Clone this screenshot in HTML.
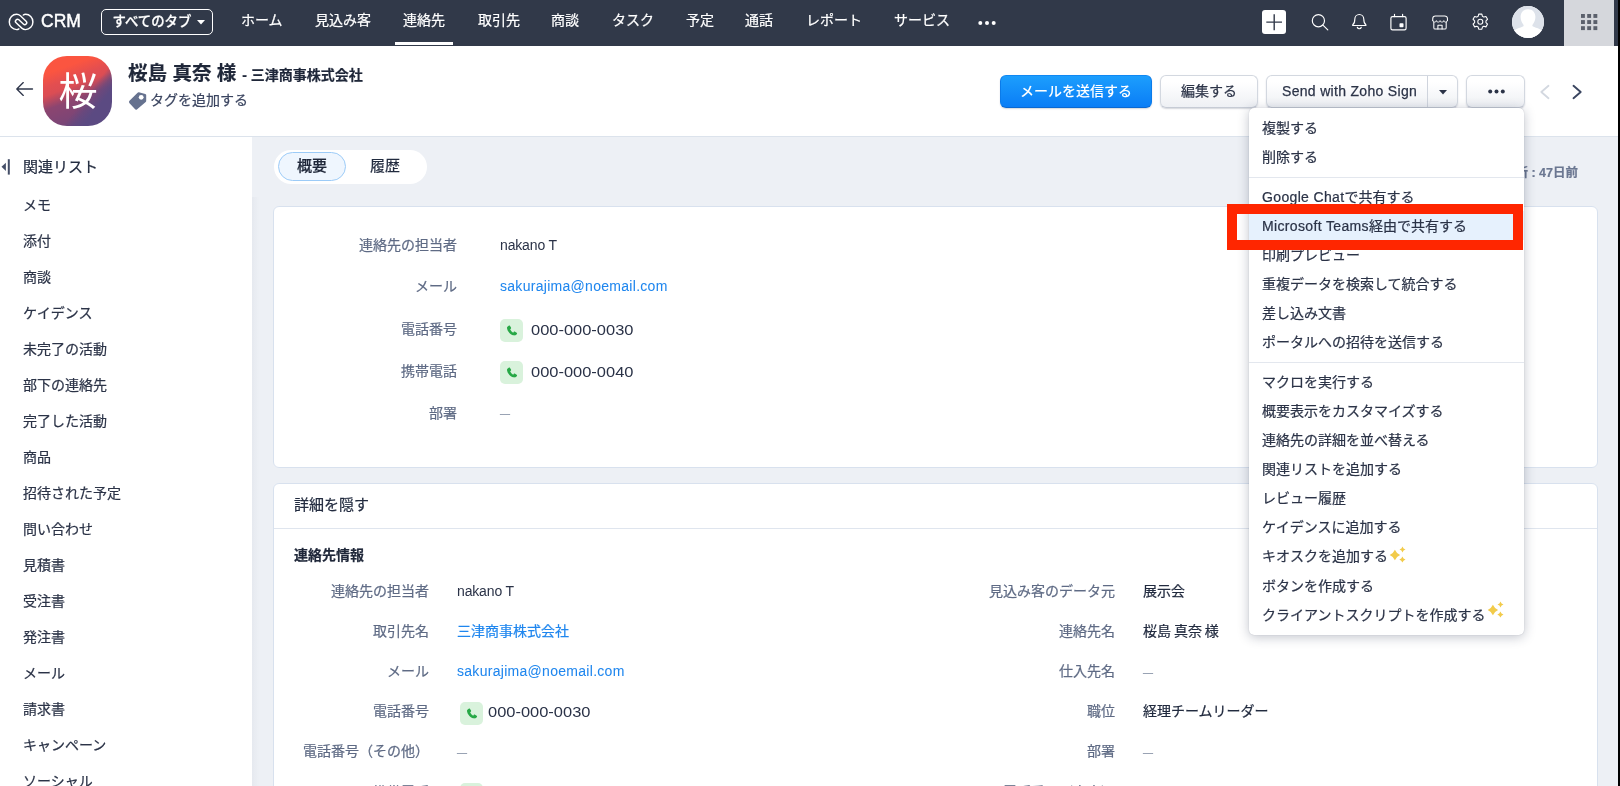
<!DOCTYPE html>
<html lang="ja">
<head>
<meta charset="utf-8">
<title>CRM</title>
<style>
*{box-sizing:border-box;margin:0;padding:0}
html,body{width:1620px;height:786px;overflow:hidden;background:#edf0f5}
body{position:relative;font-family:"Liberation Sans","Noto Sans CJK JP",sans-serif;font-size:14px;color:#222b3f;-webkit-font-smoothing:antialiased;-webkit-text-stroke-width:.220px}
#wrap{position:absolute;left:0;top:0;width:1620px;height:786px;overflow:hidden;will-change:transform;transform:translateZ(0)}
.abs{position:absolute;white-space:nowrap}
/* nav */
#nav{position:absolute;left:0;top:0;width:1618px;height:46px;background:#313949}
#nav .it{position:absolute;top:0;height:46px;line-height:40px;color:#fff;font-size:14px;white-space:nowrap}
#crm{position:absolute;left:41px;top:0;line-height:42px;font-size:17.500px;font-weight:normal;-webkit-text-stroke:.450px #fff;color:#fff;letter-spacing:0}
#alltabs{position:absolute;left:101px;top:9px;width:112px;height:26px;border:1px solid #fff;border-radius:5px;color:#fff;font-size:13.400px;line-height:23px;padding-left:10.500px;font-weight:500}
#underline{position:absolute;left:395px;top:42px;width:58px;height:3px;background:#fff}
#plus{position:absolute;left:1262px;top:10px;width:24px;height:24px;background:#fff;border-radius:3px}
#avatar{position:absolute;left:1512px;top:6px;width:32px;height:32px;border-radius:50%;background:#fff;overflow:hidden}
#apps{position:absolute;left:1564px;top:0;width:50px;height:46px;background:#d5d7dc}
/* header */
#hdr{position:absolute;left:0;top:46px;width:1618px;height:91px;background:#fff;border-bottom:1px solid #dce3ec}
#tile{position:absolute;left:43px;top:56px;width:69px;height:70px;border-radius:24px;background:linear-gradient(128deg,rgba(91,74,130,0) 60%,rgba(91,74,130,.6) 68%,#5b4a82 77%),linear-gradient(160deg,#fb5540 20%,#e34e50 34%,#db4d54 43%,#8c4570 58%,#7b4576 78%,#5b4a82 100%);color:#fff;font-size:39px;line-height:72px;text-align:center;padding-left:1px;-webkit-text-stroke-width:0}
.btn{position:absolute;top:75px;height:33px;border:1px solid #d3d8e0;border-bottom-color:#c6cbd5;border-radius:6px;background:linear-gradient(#fff 20%,#eef0f4);font-size:14px;line-height:30px;text-align:center;color:#2b3347;box-shadow:0 1px 1.500px rgba(40,50,80,.2);white-space:nowrap}
#bmail{left:1000px;width:152px;background:linear-gradient(#1c9efd,#0a7df6);border-color:#1088f3 #0b7be9 #0a68d2;color:#fff;font-weight:500;-webkit-text-stroke-width:0}
#name{left:128px;top:57.500px;line-height:30px;color:#1f2739;font-weight:bold}
#name .n1{font-size:19.500px}
#name .n2{font-size:14px;margin-left:2px}
#tagtxt{left:150px;top:90px;font-size:14px;line-height:20px;color:#3b4560}
/* sidebar */
#side{position:absolute;left:0;top:137px;width:252px;height:649px;background:#fff}
.sl{position:absolute;left:23px;font-size:14px;line-height:20px;color:#2b3347;white-space:nowrap}
/* cards */
.card{position:absolute;left:273px;width:1325px;background:#fff;border:1px solid #d8e1ee;border-radius:6px}
.lab{position:absolute;text-align:right;color:#5f6b85;font-size:14px;line-height:20px;white-space:nowrap}
.val{position:absolute;color:#222b3f;font-size:14px;line-height:20px;white-space:nowrap}
.lnk{color:#1f86ee}
.la{letter-spacing:.350px}
.em{letter-spacing:.290px;-webkit-text-stroke-width:.050px}
.lt{-webkit-text-stroke-width:0;color:#2a3247;letter-spacing:-.150px}
.dash{color:#8e98ab;font-size:10px;transform:translateY(1.800px)}
.ph{position:absolute;width:23px;height:23px;border-radius:5px;background:#d9f2dc}
#tabs{position:absolute;left:274px;top:150px;width:153px;height:34px;border-radius:17px;background:#fff}
#tabact{position:absolute;left:4px;top:2px;width:68px;height:29px;border-radius:15px;border:1px solid #9ccbf7;background:#eff6fe;font-size:15px;font-weight:500;line-height:26px;text-align:center;color:#1f2739}
#upd{right:42px;top:164px;font-size:12.500px;line-height:18px;font-weight:bold;color:#6b7791}
.num{display:inline-block;transform:translateY(1px) scaleX(1.175);transform-origin:0 50%;-webkit-text-stroke-width:0;color:#2a3247}
/* menu */
#menu{position:absolute;left:1249px;top:108px;width:275px;height:527px;background:#fff;border-radius:5px;box-shadow:0 2px 12px rgba(30,40,70,.28),0 0 1px rgba(30,40,70,.3)}
.mi{position:absolute;left:13px;font-size:14px;line-height:20px;color:#2b3347;white-space:nowrap}
.sep{position:absolute;left:0;width:275px;height:1px;background:#e3e7ee}
#red{position:absolute;left:1227px;top:204px;width:296px;height:46px;border:10px solid #ff2600}
#edge{position:absolute;left:1618px;top:0;width:2px;height:786px;background:#000}
</style>
</head>
<body>
<div id="wrap">
<div id="nav">
<svg class="abs" style="left:8px;top:12px" width="26" height="20" viewBox="0 0 26 20" fill="none" stroke="#fff" stroke-width="1.45" stroke-linecap="round"><path d="M10.9 16.9C10.2 17.4 9.4 17.6 8.600 17.600A7.300 7.650 0 0 1 8.600 2.300C10.100 2.300 11.400 2.900 12.400 3.800L18.100 9.180A2 2 0 0 1 15.340 12.080L10.860 7.820A2 2 0 0 0 8.100 10.720L13.800 16.100C14.800 17 16.100 17.600 17.600 17.600A7.300 7.650 0 0 0 17.600 2.300C16.800 2.300 16 2.500 15.300 3"/></svg>
<div id="crm">CRM</div>
<div id="alltabs">すべてのタブ<svg class="abs" style="left:95px;top:10px" width="8" height="5" viewBox="0 0 8 5"><path d="M0 0h8L4 4.600z" fill="#fff"/></svg></div>
<div class="it" style="left:241px">ホーム</div>
<div class="it" style="left:315px">見込み客</div>
<div class="it" style="left:403px">連絡先</div>
<div class="it" style="left:478px">取引先</div>
<div class="it" style="left:551px">商談</div>
<div class="it" style="left:612px">タスク</div>
<div class="it" style="left:686px">予定</div>
<div class="it" style="left:745px">通話</div>
<div class="it" style="left:806px">レポート</div>
<div class="it" style="left:894px">サービス</div>
<svg class="abs" style="left:978px;top:20px" width="18" height="6" viewBox="0 0 18 6" fill="#fff"><circle cx="2.300" cy="3" r="2"/><circle cx="9" cy="3" r="2"/><circle cx="15.700" cy="3" r="2"/></svg>
<div id="underline"></div>
<div id="plus"><svg width="24" height="24" viewBox="0 0 24 24" stroke="#313949" stroke-width="1.400" fill="none"><path d="M12.200 4.200v16M4.300 12.100h15.700"/></svg></div>
<svg class="abs" style="left:1310px;top:12px" width="20" height="20" viewBox="0 0 20 20" fill="none" stroke="#fff" stroke-width="1.150" stroke-linecap="round"><circle cx="8.400" cy="8.700" r="6.100"/><path d="M12.900 13.200l4.900 4.700"/></svg>
<svg class="abs" style="left:1350px;top:12px" width="20" height="20" viewBox="0 0 20 20" fill="none" stroke="#fff" stroke-width="1.150" stroke-linecap="round" stroke-linejoin="round"><path d="M2.700 12.800c1.600-1.100 2.100-2.500 2.100-5.500a4.500 4.800 0 0 1 9 0c0 3 .500 4.400 2.100 5.500c.300.300.100.700-.300.700H3c-.400 0-.600-.400-.300-.700z"/><path d="M7.300 15.300a2.100 2.100 0 0 0 4 0"/></svg>
<svg class="abs" style="left:1389px;top:12px" width="20" height="20" viewBox="0 0 20 20" fill="none" stroke="#fff" stroke-width="1.150" stroke-linejoin="round"><rect x="1.900" y="4.600" width="15.200" height="13.300" rx="1.600"/><path d="M5.500 2.300v2.300M13.600 2.300v2.300" stroke-linecap="round"/><rect x="10.500" y="11.300" width="4" height="4" rx=".800" fill="#fff" stroke="none"/></svg>
<svg class="abs" style="left:1431px;top:13px" width="18.200" height="18.200" viewBox="0 0 20 20" fill="none" stroke="#fff" stroke-width="1.150" stroke-linejoin="round" stroke-linecap="round"><path d="M1.900 8.300V6.200a3 3 0 0 1 3-3h10.200a3 3 0 0 1 3 3v2.100"/><path d="M1.900 8.300a2 1.700 0 0 0 4 0a2 1.700 0 0 0 4.100 0a2 1.700 0 0 0 4.100 0a2 1.700 0 0 0 4 0" stroke-width=".900"/><path d="M3.100 9.800v6.400a1.500 1.500 0 0 0 1.500 1.500h10.600a1.500 1.500 0 0 0 1.500-1.500V9.800"/><path d="M7.600 17.700v-4.200h4.600v4.200"/></svg>
<svg class="abs" style="left:1470.700px;top:12px" width="18.600" height="18.600" viewBox="0 0 20 20" fill="none" stroke="#fff" stroke-width="1.150" stroke-linejoin="round"><circle cx="10" cy="10.500" r="2.700"/><path d="M8.300 2.300h3.400l.600 2.300 1.500.900 2.300-.700 1.700 3-1.700 1.700v1.800l1.700 1.700-1.700 3-2.300-.700-1.500.900-.600 2.300H8.300l-.600-2.300-1.500-.900-2.300.700-1.700-3 1.700-1.700V9.500L2.200 7.800l1.700-3 2.300.700 1.500-.900z" stroke-linecap="round"/></svg>
<div id="avatar"><svg width="32" height="32" viewBox="0 0 32 32"><rect width="32" height="32" fill="#dde2ea"/><path d="M16 3.300c4.800 0 7.400 3.400 7.400 7.800 0 3-1.300 5.900-2.700 7.500-.6.700-.4 1.600.4 2 2.600 1.200 6.900 2.200 9.400 4.400v8H1.500v-8c2.500-2.200 6.800-3.200 9.400-4.400.8-.4 1-1.300.4-2-1.400-1.600-2.700-4.500-2.700-7.500 0-4.400 2.600-7.800 7.400-7.800z" fill="#fff"/></svg></div>
<div id="apps"><svg class="abs" style="left:17px;top:14px" width="17" height="17" viewBox="0 0 17 17" fill="#5b606c"><rect x="0" y="0" width="3.900" height="3.900"/><rect x="6.200" y="0" width="3.900" height="3.900"/><rect x="12.400" y="0" width="3.900" height="3.900"/><rect x="0" y="6.100" width="3.900" height="3.900"/><rect x="6.200" y="6.100" width="3.900" height="3.900"/><rect x="12.400" y="6.100" width="3.900" height="3.900"/><rect x="0" y="12.200" width="3.900" height="3.900"/><rect x="6.200" y="12.200" width="3.900" height="3.900"/><rect x="12.400" y="12.200" width="3.900" height="3.900"/></svg></div>
</div>
<div id="hdr"></div>
<svg class="abs" style="left:15px;top:81px" width="19" height="16" viewBox="0 0 19 16" fill="none" stroke="#2f374b" stroke-width="1.350" stroke-linecap="round" stroke-linejoin="round"><path d="M17.500 8H2M8.300 1.600L1.800 8l6.500 6.400"/></svg>
<div id="tile">桜</div>
<div class="abs" id="name"><span class="n1">桜島 真奈 様</span><span class="n2"> - 三津商事株式会社</span></div>
<svg class="abs" style="left:128px;top:92px" width="20" height="19" viewBox="0 0 20 19"><path d="M10.900.300L17.300 1.900Q18.200 2.100 18.200 3L18.200 8.700Q18.200 9.400 17.700 9.900L8.900 17.400Q7.800 18.200 6.900 17.100L1.300 10.900Q.500 9.800 1.500 8.800L9.600.700Q10.100.150 10.900.300z" fill="#66728f"/><circle cx="13.200" cy="5.300" r="2.400" fill="#fff"/></svg>
<div class="abs" id="tagtxt">タグを追加する</div>
<div class="btn" id="bmail">メールを送信する</div>
<div class="btn" style="left:1160px;width:98px">編集する</div>
<div class="btn" id="bsend" style="left:1266px;width:192px;text-align:left;padding-left:15px;letter-spacing:.310px;-webkit-text-stroke:.250px #2b3347">Send with Zoho Sign<span class="abs" style="left:160px;top:0;width:1px;height:31px;background:#cfd4dd"></span><svg class="abs" style="left:172px;top:14px" width="8" height="5" viewBox="0 0 8 5"><path d="M0 0h8L4 4.500z" fill="#2b3347"/></svg></div>
<div class="btn" style="left:1466px;width:59px"><svg class="abs" style="left:21px;top:13px" width="17" height="5" viewBox="0 0 17 5" fill="#2b3347"><circle cx="2.200" cy="2.500" r="2"/><circle cx="8.500" cy="2.500" r="2"/><circle cx="14.800" cy="2.500" r="2"/></svg></div>
<svg class="abs" style="left:1539px;top:84px" width="12" height="16" viewBox="0 0 12 16" fill="none" stroke="#d3d8e0" stroke-width="1.800" stroke-linecap="round" stroke-linejoin="round"><path d="M9.500 1.800L2.300 8l7.200 6.200"/></svg>
<svg class="abs" style="left:1571px;top:84px" width="12" height="16" viewBox="0 0 12 16" fill="none" stroke="#3a4560" stroke-width="1.900" stroke-linecap="round" stroke-linejoin="round"><path d="M2.500 1.800L9.700 8l-7.200 6.200"/></svg>
<div id="side"></div>
<svg class="abs" style="left:1px;top:159px" width="10" height="16" viewBox="0 0 10 16"><path d="M4.900 3.700v8.200L0.500 7.800z" fill="#454f68"/><rect x="6.800" y="0.200" width="2" height="15.400" fill="#454f68"/></svg>
<div class="sl" style="top:157px;font-size:15px;color:#222b3f">関連リスト</div>
<div class="sl" style="top:195px">メモ</div>
<div class="sl" style="top:231px">添付</div>
<div class="sl" style="top:267px">商談</div>
<div class="sl" style="top:303px">ケイデンス</div>
<div class="sl" style="top:339px">未完了の活動</div>
<div class="sl" style="top:375px">部下の連絡先</div>
<div class="sl" style="top:411px">完了した活動</div>
<div class="sl" style="top:447px">商品</div>
<div class="sl" style="top:483px">招待された予定</div>
<div class="sl" style="top:519px">問い合わせ</div>
<div class="sl" style="top:555px">見積書</div>
<div class="sl" style="top:591px">受注書</div>
<div class="sl" style="top:627px">発注書</div>
<div class="sl" style="top:663px">メール</div>
<div class="sl" style="top:699px">請求書</div>
<div class="sl" style="top:735px">キャンペーン</div>
<div class="sl" style="top:771px">ソーシャル</div>
<div class="abs" style="left:252px;top:197px;width:7px;height:589px;background:linear-gradient(90deg,rgba(60,70,100,.040),rgba(60,70,100,0))"></div>
<div id="tabs"><div id="tabact">概要</div><div class="abs" style="left:96px;top:0;line-height:32px;font-size:15px;color:#222b3f">履歴</div></div>
<div class="abs" id="upd">最終更新 : 47日前</div>
<div class="card" style="top:206px;height:262px"></div>
<div class="lab" style="left:257px;width:200px;top:235px">連絡先の担当者</div><span class="val lt" style="left:500px;top:235px">nakano T</span>
<div class="lab" style="left:257px;width:200px;top:276px">メール</div><span class="val lnk em" style="left:500px;top:276px">sakurajima@noemail.com</span>
<div class="lab" style="left:257px;width:200px;top:319px">電話番号</div><div class="ph" style="left:500px;top:319px"><svg class="abs" style="left:5.500px;top:5.500px" width="12" height="12" viewBox="0 0 11 11"><path d="M2.500.700c.400-.300.900-.200 1.200.200l.900 1.500c.200.400.100.800-.200 1.100l-.600.500c.600 1.300 1.500 2.300 2.800 3l.600-.700c.300-.300.700-.400 1.100-.200l1.500.900c.400.300.500.800.200 1.200-.500.800-1.300 1.400-2.300 1.300C4.300 9.200 1.300 6 .900 2.700.900 1.900 1.600 1.100 2.500.700z" fill="#27a846"/></svg></div>
<span class="val num" style="left:531px;top:319px">000-000-0030</span>
<div class="lab" style="left:257px;width:200px;top:361px">携帯電話</div><div class="ph" style="left:500px;top:361px"><svg class="abs" style="left:5.500px;top:5.500px" width="12" height="12" viewBox="0 0 11 11"><path d="M2.500.700c.400-.300.900-.200 1.200.200l.900 1.500c.200.400.100.800-.200 1.100l-.600.500c.600 1.300 1.500 2.300 2.800 3l.600-.700c.300-.300.700-.400 1.100-.200l1.500.900c.400.300.500.800.200 1.200-.500.800-1.300 1.400-2.300 1.300C4.300 9.200 1.300 6 .900 2.700.900 1.900 1.600 1.100 2.500.700z" fill="#27a846"/></svg></div>
<span class="val num" style="left:531px;top:361px">000-000-0040</span>
<div class="lab" style="left:257px;width:200px;top:403px">部署</div><span class="val dash" style="left:500px;top:402px">—</span>
<div class="card" style="top:483px;height:320px"><div class="abs" style="left:0;top:44px;width:1323px;height:1px;background:#dfe5ee"></div></div>
<div class="abs" style="left:294px;top:495px;font-size:15px;line-height:20px;color:#222b3f">詳細を隠す</div>
<div class="abs" style="left:294px;top:545px;font-size:14px;line-height:20px;font-weight:bold;color:#1f2739">連絡先情報</div>
<div class="lab" style="left:229px;width:200px;top:581px">連絡先の担当者</div><span class="val lt" style="left:457px;top:581px">nakano T</span>
<div class="lab" style="left:915px;width:200px;top:581px">見込み客のデータ元</div><span class="val" style="left:1143px;top:581px">展示会</span>
<div class="lab" style="left:229px;width:200px;top:621px">取引先名</div><span class="val lnk" style="left:457px;top:621px">三津商事株式会社</span>
<div class="lab" style="left:915px;width:200px;top:621px">連絡先名</div><span class="val" style="left:1143px;top:621px;word-spacing:-1px">桜島 真奈 様</span>
<div class="lab" style="left:229px;width:200px;top:661px">メール</div><span class="val lnk em" style="left:457px;top:661px">sakurajima@noemail.com</span>
<div class="lab" style="left:915px;width:200px;top:661px">仕入先名</div><span class="val dash" style="left:1143px;top:661px">—</span>
<div class="lab" style="left:229px;width:200px;top:701px">電話番号</div><div class="ph" style="left:460px;top:702px"><svg class="abs" style="left:5.500px;top:5.500px" width="12" height="12" viewBox="0 0 11 11"><path d="M2.500.700c.400-.300.900-.200 1.200.200l.900 1.500c.200.400.100.800-.200 1.100l-.600.500c.600 1.300 1.500 2.300 2.800 3l.600-.700c.300-.300.700-.400 1.100-.200l1.500.900c.400.300.500.800.200 1.200-.500.800-1.300 1.400-2.300 1.300C4.300 9.200 1.300 6 .900 2.700.900 1.900 1.600 1.100 2.500.700z" fill="#27a846"/></svg></div>
<span class="val num" style="left:488px;top:701px">000-000-0030</span>
<div class="lab" style="left:915px;width:200px;top:701px">職位</div><span class="val" style="left:1143px;top:701px">経理チームリーダー</span>
<div class="lab" style="left:229px;width:200px;top:741px">電話番号（その他）</div><span class="val dash" style="left:457px;top:741px">—</span>
<div class="lab" style="left:915px;width:200px;top:741px">部署</div><span class="val dash" style="left:1143px;top:741px">—</span>
<div class="lab" style="left:229px;width:200px;top:782px">携帯電話</div><div class="ph" style="left:460px;top:783px"><svg class="abs" style="left:5.500px;top:5.500px" width="12" height="12" viewBox="0 0 11 11"><path d="M2.500.700c.400-.300.900-.200 1.200.200l.900 1.500c.200.400.100.800-.200 1.100l-.600.500c.600 1.300 1.500 2.300 2.800 3l.600-.700c.300-.300.700-.400 1.100-.200l1.500.900c.400.300.500.800.200 1.200-.500.800-1.300 1.400-2.300 1.300C4.300 9.200 1.300 6 .900 2.700.900 1.900 1.600 1.100 2.500.700z" fill="#27a846"/></svg></div>
<span class="val num" style="left:488px;top:782px">000-000-0040</span>
<div class="lab" style="left:915px;width:200px;top:782px">電話番号（自宅）</div><span class="val dash" style="left:1143px;top:782px">—</span>
<div id="menu">
<div class="abs" style="left:0;top:103px;width:275px;height:29px;background:#e6f1fd"></div>
<div class="sep" style="top:69px"></div><div class="sep" style="top:254px"></div>
<div class="mi" style="top:10px">複製する</div>
<div class="mi" style="top:39px">削除する</div>
<div class="mi" style="top:79px"><span class="la">Google Chat</span>で共有する</div>
<div class="mi" style="top:108px"><span class="la">Microsoft Teams</span>経由で共有する</div>
<div class="mi" style="top:137px">印刷プレビュー</div>
<div class="mi" style="top:166px">重複データを検索して統合する</div>
<div class="mi" style="top:195px">差し込み文書</div>
<div class="mi" style="top:224px">ポータルへの招待を送信する</div>
<div class="mi" style="top:264px">マクロを実行する</div>
<div class="mi" style="top:293px">概要表示をカスタマイズする</div>
<div class="mi" style="top:322px">連絡先の詳細を並べ替える</div>
<div class="mi" style="top:351px">関連リストを追加する</div>
<div class="mi" style="top:380px">レビュー履歴</div>
<div class="mi" style="top:409px">ケイデンスに追加する</div>
<div class="mi" style="top:438px">キオスクを追加する</div>
<div class="mi" style="top:468px">ボタンを作成する</div>
<div class="mi" style="top:497px">クライアントスクリプトを作成する</div>
<svg class="abs" style="left:140px;top:438px" width="18" height="18" viewBox="0 0 18 18" fill="#f2cb4b"><path d="M5.90 3.80Q7.46 7.44 11.10 9.00Q7.46 10.56 5.90 14.20Q4.34 10.56 0.70 9.00Q4.34 7.44 5.90 3.80z"/><path d="M13.50 0.50Q14.16 2.84 16.50 3.50Q14.16 4.16 13.50 6.50Q12.84 4.16 10.50 3.50Q12.84 2.84 13.50 0.50z"/><path d="M13.40 10.40Q14.18 12.72 16.50 13.50Q14.18 14.28 13.40 16.60Q12.62 14.28 10.30 13.50Q12.62 12.72 13.40 10.40z"/></svg><svg class="abs" style="left:238px;top:493px" width="18" height="18" viewBox="0 0 18 18" fill="#f2cb4b"><path d="M5.90 3.80Q7.46 7.44 11.10 9.00Q7.46 10.56 5.90 14.20Q4.34 10.56 0.70 9.00Q4.34 7.44 5.90 3.80z"/><path d="M13.50 0.50Q14.16 2.84 16.50 3.50Q14.16 4.16 13.50 6.50Q12.84 4.16 10.50 3.50Q12.84 2.84 13.50 0.50z"/><path d="M13.40 10.40Q14.18 12.72 16.50 13.50Q14.18 14.28 13.40 16.60Q12.62 14.28 10.30 13.50Q12.62 12.72 13.40 10.40z"/></svg></div>
<div id="red"></div>
<div id="edge"></div>
</div>
</body>
</html>
